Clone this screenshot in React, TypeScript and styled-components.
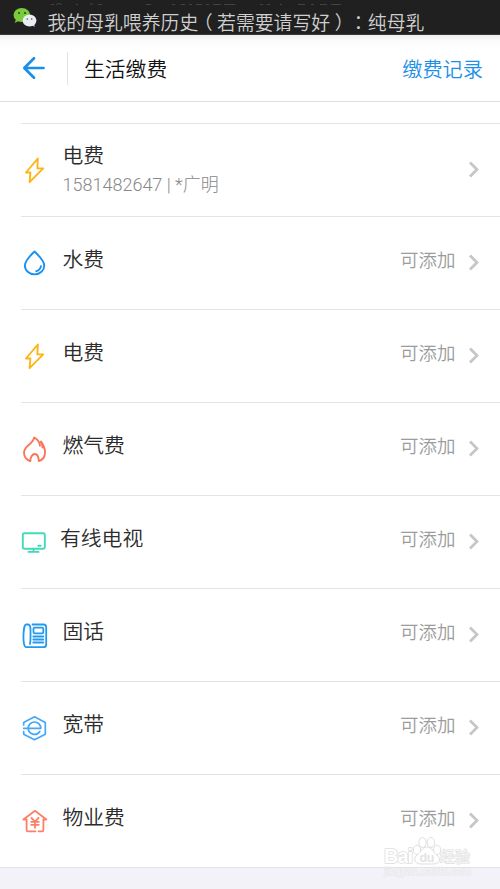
import React from 'react';
import styled, { createGlobalStyle } from 'styled-components';

const Global = createGlobalStyle`
  * { box-sizing: border-box; }
  body { margin: 0; background: #fff; font-family: Roboto, "Noto Sans CJK SC", sans-serif; }
`;

const Screen = styled.main`
  width: 500px;
  height: 889px;
  display: flex;
  flex-direction: column;
  overflow: hidden;
  background: #fff;
`;

const StatusBar = styled.div`
  height: 35px;
  flex: none;
  display: flex;
  padding-left: 13px;
  background: #202020;
  border-bottom: 1px solid #383636;
`;

const Ticker = styled.div`
  display: flex;
  flex-direction: column;
  margin-left: 10.5px;
`;

const PreviousLine = styled.svg`
  display: block;
  height: 7px;
  flex: none;
`;

const TickerText = styled.div`
  padding-top: 3px;
  font-size: 18.85px;
  line-height: 24px;
  font-weight: 350;
  color: #cfcfcf;
  white-space: nowrap;
  text-spacing-trim: space-all;
`;

const Mark = styled.span<{ $shift?: number }>`
  font-family: "Noto Sans CJK TC", sans-serif;
  margin-left: ${p => p.$shift ?? 0}px;
  margin-right: ${p => -(p.$shift ?? 0)}px;
`;

const Header = styled.header`
  height: 67px;
  flex: none;
  display: flex;
  align-items: center;
  padding: 0 17px 0 22px;
  background: linear-gradient(#efefef, #fbfbfb 6px, #fff 14px);
  border-bottom: 1px solid #dedede;
`;

const Divider = styled.div`
  width: 1px;
  height: 33px;
  margin: 0 16px 0 21px;
  background: #e4e4e4;
`;

const Title = styled.h1`
  flex: 1;
  margin: 3px 0 0;
  font-size: 20.8px;
  line-height: 30px;
  font-weight: 350;
  color: #111;
`;

const HeaderLink = styled.a`
  margin-top: 3px;
  font-size: 20.2px;
  line-height: 30px;
  font-weight: 350;
  color: #1b90e8;
`;

const List = styled.ul`
  margin: 21px 0 0 21px;
  padding: 0;
  list-style: none;
  flex: none;
`;

const Row = styled.li`
  height: 93px;
  display: flex;
  border-top: 1px solid #e3e3e3;
  padding-right: 20px;
`;

const IconSlot = styled.div<{ $wide?: boolean }>`
  width: ${p => (p.$wide ? 39 : 41.5)}px;
  padding-top: 32.5px;
  flex: none;
  svg { display: block; }
`;

const Labels = styled.div<{ $double?: boolean }>`
  flex: 1;
  padding-top: ${p => (p.$double ? 17 : 28)}px;
`;

const Name = styled.div`
  font-size: 20.8px;
  line-height: 30px;
  font-weight: 350;
  color: #2c2c2c;
`;

const Account = styled.div`
  font-size: 18px;
  line-height: 27px;
  font-weight: 300;
  color: #888;
`;

const Status = styled.div`
  padding-top: 29px;
  margin-right: 12.5px;
  font-size: 18.5px;
  line-height: 30px;
  font-weight: 350;
  color: #9c9c9c;
`;

const Chevron = styled.svg`
  display: block;
  flex: none;
  margin-top: 37px;
`;

const Footer = styled.footer`
  flex: 1;
  position: relative;
  background: #f2f2f8;
  border-top: 1px solid #e3e3e6;
`;

const Watermark = styled.div`
  position: absolute;
  left: 383px;
  top: -33px;
  width: 95px;
  svg { display: block; overflow: visible; }
`;

const line = { fill: 'none', strokeLinecap: 'round', strokeLinejoin: 'round' } as const;

const Bolt = () => (
  <svg width="28" height="28" viewBox="0 0 28 28" {...line} stroke="#fdb515" strokeWidth="1.9">
    <path d="M16.8 1.5 5 15.500h4.400L8.600 25.200 22.200 11.400h-5.800z" />
  </svg>
);
const Drop = () => (
  <svg width="28" height="28" viewBox="0 0 28 28" {...line} stroke="#1890f0" strokeWidth="1.9">
    <path d="M13.500 1.500C10 5 3.900 10.500 3.900 15.500a9.700 8.900 0 0 0 19.400 0C23.300 10.500 17 5 13.500 1.500z" />
    <path d="M20 16.200c-.5 2.700-2.200 4.500-4.700 5" />
  </svg>
);
const Flame = () => (
  <svg width="28" height="28" viewBox="0 0 28 28" {...line} stroke="#fb7458" strokeWidth="1.9">
    <path d="M9.300 25C5.500 24 3 20.500 3 16.500c0-7 8.400-7.500 10.200-15 3.500 2 5.500 4.600 5.800 8.200" />
    <path d="M20 5.500c2 2.900 4 6.300 4 10.700 0 4.200-2.200 7.700-6.200 8.800-.1-4-1.700-7-4-7s-4.400 3-4.500 7" />
    <path d="M20 6c1.200 1.800 1.600 3.700 1.500 5.500" />
  </svg>
);
const Television = () => (
  <svg width="28" height="28" viewBox="0 0 28 28" {...line} stroke="#43d9b9" strokeWidth="1.900">
    <rect x="1.800" y="4.300" width="22" height="15.500" rx="1.500" />
    <path d="M12.500 20v2.600M7.500 22.900h10M17.300 16.800h2.300" />
  </svg>
);
const Phone = () => (
  <svg width="28" height="28" viewBox="0 0 28 28" {...line} stroke="#229aef" strokeWidth="1.800">
    <path d="M11.500 2.500h11c1.700 0 2.700.9 2.700 2.600v17.300c0 1.700-1 2.700-2.700 2.700H5.200c-4.300 0-3-22.600-.2-22.600h1.800c2.600 0 2.700 2 2.700 4.800v9c0 2.300-.1 4.200-.6 5.700" />
    <rect x="12.500" y="5.700" width="9.800" height="5.600" rx="1" />
    <path d="M12.300 14.500h10M12.300 17.500h10M12.300 20.500h10" />
  </svg>
);
const Broadband = () => (
  <svg width="28" height="28" viewBox="0 0 28 28" {...line} stroke="#45a8f7" strokeWidth="1.700">
    <path d="M2.700 10V7.400L13.500 1.800l10.800 5.600v11.800L13.500 24.700 2.700 19.200v-2.500" />
    <path d="M2.700 13.300h17.100A6.300 6.300 0 0 0 7.200 13.300a6.300 6.300 0 0 0 11.600 3.200" />
  </svg>
);
const House = () => (
  <svg width="28" height="28" viewBox="0 0 28 28" {...line} stroke="#fb8067" strokeWidth="1.800">
    <path d="M14.500 23.300H7c-1 0-1.400-.4-1.400-1.400V11.500H2.400L14 2.800l11.400 8.700h-3v10.400c0 1-.4 1.400-1.400 1.400h-3.500" />
    <path d="m10.500 10 3.500 3.600 3.500-3.600M10.200 13.800h7.600M10.200 16.800h7.600M14 13.800v6" />
  </svg>
);

const WeChat = () => (
  <svg width="24" height="34" viewBox="0 0 24 34">
    <path d="M3 19.500 1.500 23l4-1.900z" fill="#79c83b" />
    <ellipse cx="8.800" cy="15" rx="8.300" ry="7" fill="#7bca3b" />
    <circle cx="6" cy="13" r="1" fill="#28461a" /><circle cx="12" cy="13" r="1" fill="#28461a" />
    <path d="m19 25 2.500 2-.3-4z" fill="#dfe5eb" />
    <ellipse cx="16.500" cy="20.500" rx="6.900" ry="5.900" fill="#e9edf2" />
    <circle cx="14.300" cy="19" r=".8" fill="#4a5058" /><circle cx="18.700" cy="19" r=".8" fill="#4a5058" />
  </svg>
);

const services = [
  { name: '电费', account: '1581482647 | *广明', Icon: Bolt },
  { name: '水费', Icon: Drop },
  { name: '电费', Icon: Bolt },
  { name: '燃气费', Icon: Flame },
  { name: '有线电视', Icon: Television },
  { name: '固话', Icon: Phone },
  { name: '宽带', Icon: Broadband },
  { name: '物业费', Icon: House },
];

export default function App() {
  return (
    <Screen>
      <Global />
      <StatusBar>
        <WeChat />
        <Ticker>
          <PreviousLine width="320" height="7" viewBox="0 0 320 7" stroke="#424242" strokeWidth="1" fill="none">
            <path d="M3 4.500h3M8 4.500l3-1 3 1M28 4.500h2M42 4.500l3-1M50 4.500h4M98 4.500h5M124 4.500h3M133 4.500h4M141 4.500h3M148 4.500h6M158 4.500h3M165 4.500h8M176 4.500h11M212 4.500h3M219 4.500h3M232 4.500h2M250 4.500h7M263 4.500h3M272 4.500h7M283 4.500h10" />
          </PreviousLine>
          <TickerText>
            我的母乳喂养历史<Mark $shift={-4.5}>（</Mark>若需要请写好<Mark $shift={4.5}>）</Mark><Mark>：</Mark>纯母乳
          </TickerText>
        </Ticker>
      </StatusBar>
      <Header>
        <svg width="24" height="24" viewBox="0 0 24 24" {...line} stroke="#1890eb" strokeWidth="2.700">
          <path d="M21.500 12H2.500M12 2.300 2.300 12 12 21.700" />
        </svg>
        <Divider />
        <Title>生活缴费</Title>
        <HeaderLink>缴费记录</HeaderLink>
      </Header>
      <List>
        {services.map(({ name, account, Icon }, i) => (
          <Row key={i}>
            <IconSlot $wide={Icon === Television}><Icon /></IconSlot>
            <Labels $double={!!account}>
              <Name>{name}</Name>
              {account && <Account>{account}</Account>}
            </Labels>
            {!account && <Status>可添加</Status>}
            <Chevron width="12" height="17" viewBox="0 0 12 17" fill="none" stroke="#c5c5ca" strokeWidth="2.700">
              <path d="m2 1.500 7 7-7 7" />
            </Chevron>
          </Row>
        ))}
      </List>
      <Footer>
        <Watermark>
          <svg width="95" height="46" viewBox="0 0 95 46" fill="#fff" stroke="#dedede" strokeWidth="1">
            <ellipse cx="34" cy="15" rx="3.700" ry="4.800" /><ellipse cx="39.500" cy="7.500" rx="3.700" ry="5" />
            <ellipse cx="48" cy="7.500" rx="3.700" ry="5" /><ellipse cx="54" cy="15" rx="3.700" ry="4.800" />
            <path d="M44 12c-5 0-6 5-10 8-5 5-1 9 4 9h12c6 0 9-4 4-9-4-3-5-8-10-8z" />
            <g fontFamily="Liberation Sans" fontWeight="700" strokeLinejoin="round" paintOrder="stroke" strokeWidth="1.600">
              <text x="1" y="28" fontSize="20" textLength="29">Bai</text>
              <text x="36.500" y="27" fontSize="12.500" fill="#e3e3e3" stroke="none" textLength="15">du</text>
              <text x="57" y="27" fontSize="15" fontWeight="400" fontFamily="Noto Sans CJK SC" fill="#f6f6f6" stroke="#e0e0e0" strokeWidth="1.200" textLength="30">经验</text>
              <text x="1" y="40" fontSize="11" fontWeight="400" strokeWidth="1" stroke="#e3e3e7" fill="#f6f6fa" textLength="87">jingyan.baidu.com</text>
            </g>
          </svg>
        </Watermark>
      </Footer>
    </Screen>
  );
}
